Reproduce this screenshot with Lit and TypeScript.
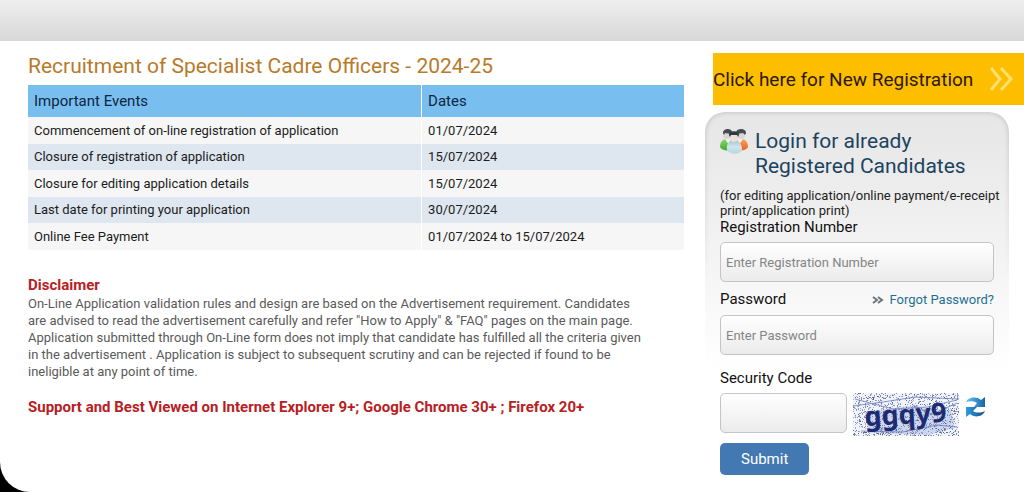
import { LitElement, html, css, svg } from "lit";
import { customElement } from "lit/decorators.js";

const EVENTS: [string, string][] = [
  ["Commencement of on-line registration of application", "01/07/2024"],
  ["Closure of registration of application", "15/07/2024"],
  ["Closure for editing application details", "15/07/2024"],
  ["Last date for printing your application", "30/07/2024"],
  ["Online Fee Payment", "01/07/2024 to 15/07/2024"],
];

/* Speckle field of the captcha, from a small seeded generator so it is stable. */
function speckles(count: number, w: number, h: number) {
  let seed = 7919;
  const rnd = () => {
    seed = (seed * 16807) % 2147483647;
    return seed / 2147483647;
  };
  const tones = ["#5b6691", "#7e89b5", "#a9b3d0", "#858ca6", "#9aa5c4"];
  return Array.from({ length: count }, () => ({
    x: Math.floor(rnd() * w),
    y: Math.floor(rnd() * h),
    fill: tones[Math.floor(rnd() * tones.length)],
  }));
}

@customElement("captcha-image")
export class CaptchaImage extends LitElement {
  static styles = css`
    :host { display: block; flex: none; }
    svg { display: block; overflow: visible; }
    .code { font: bold 27px/30px "Noto Sans", sans-serif; fill: #1c2b72; }
  `;
  private dots = speckles(1200, 106, 43);
  render() {
    return html`<svg width="106" height="43" viewBox="0 0 106 43" role="img" aria-label="Security code image">
      <rect width="106" height="43" fill="#f1f3fa" />
      <path d="M12 19 58 13l40 4 4 18-28 7-58-2z" fill="#b9c6ea" opacity=".65" />
      ${this.dots.map((d) => svg`<rect x=${d.x} y=${d.y} width="1" height="1" fill=${d.fill} />`)}
      <g fill="none" stroke="#6b7dbb" stroke-width="1" opacity=".8">
        <path d="M0 13 30 9l32-5 44 2" />
        <path d="M2 6l38 10 34-2 30-7" />
        <path d="M8 38l42 1 34-7 20 2" />
        <path d="M60 12l18 10 26-12" />
      </g>
      <text class="code" x="12" y="33" transform="rotate(-3 12 33)">ggqy9</text>
    </svg>`;
  }
}

@customElement("events-table")
export class EventsTable extends LitElement {
  static styles = css`
    :host { display: block; }
    table { width: 100%; border-collapse: collapse; table-layout: fixed; color: #1c1c1c; font-size: 13px; line-height: 16px; }
    th, td { box-sizing: border-box; padding: 0 6px; text-align: left; font-weight: 400; }
    th { height: 32px; background: #78beef; color: #10253f; font-size: 15px; }
    .event { width: 60%; border-right: 1px solid #fff; }
    td { height: 27px; background: #f6f6f6; }
    tr:nth-child(even) td { height: 26px; background: #dee6ef; }
  `;
  render() {
    return html`<table>
      <thead>
        <tr><th class="event" scope="col">Important Events</th><th scope="col">Dates</th></tr>
      </thead>
      <tbody>
        ${EVENTS.map(([name, date]) => html`<tr><td class="event">${name}</td><td>${date}</td></tr>`)}
      </tbody>
    </table>`;
  }
}

@customElement("login-panel")
export class LoginPanel extends LitElement {
  static styles = css`
    :host { display: block; }
    * { box-sizing: border-box; }
    .panel {
      padding: 17px 15px 16px;
      border-radius: 20px;
      background: linear-gradient(#e6e6e6, #f0f0f0 110px, #fff 258px);
      position: relative;
    }
    .panel::before {
      content: "";
      position: absolute;
      inset: 0;
      box-shadow: inset 0 0 4px 1px #c6c6c6;
      border-radius: 20px;
      pointer-events: none;
      -webkit-mask-image: linear-gradient(#000, transparent 170px);
      mask-image: linear-gradient(#000, transparent 170px);
    }
    .title { display: flex; gap: 6px; margin: 0; color: #1c4461; font-size: 21px; line-height: 25px; font-weight: 400; }
    .title svg { flex: none; }
    .note { margin: 9px -8px 1px 0; font-size: 13px; line-height: 15px; color: #222; }
    label { display: block; font-size: 15px; line-height: 17px; color: #111; }
    input {
      display: block;
      width: 100%;
      height: 40px;
      padding: 0 5px;
      border: 1px solid #c4c4c4;
      border-radius: 5px;
      background: linear-gradient(#fff, #ebebeb);
      font: 13px Roboto, sans-serif;
      color: #222;
    }
    input::placeholder { color: #858585; opacity: 1; }
    .field { margin-top: 6px; }
    .row { display: flex; justify-content: space-between; align-items: center; margin: 9px 0 7px; }
    .forgot { display: flex; align-items: center; gap: 5px; color: #1f7090; font-size: 13px; line-height: 16px; text-decoration: none; }
    .security { margin-top: 15px; }
    .captcha { display: flex; gap: 6px; margin-top: 6px; }
    .captcha input { width: 127px; }
    .refresh { margin-top: 3px; padding: 0; border: 0; background: none; height: 22px; }
    .refresh svg { display: block; }
    .submit {
      display: block;
      margin-top: 7px;
      padding: 7px 21px;
      border: 0;
      border-radius: 5px;
      background: #4379b2;
      color: #fff;
      font: 15px/18px Roboto, sans-serif;
    }
  `;
  render() {
    return html`<form class="panel" @submit=${(e: Event) => e.preventDefault()}>
      <h2 class="title">
        <svg width="29" height="25" viewBox="0 0 29 25" aria-hidden="true">
          <defs>
            <linearGradient id="green" x2="0" y2="1"><stop stop-color="#8fd46a" /><stop offset="1" stop-color="#3fae2f" /></linearGradient>
            <linearGradient id="orange" x2="0" y2="1"><stop stop-color="#f9a35e" /><stop offset="1" stop-color="#e8641c" /></linearGradient>
            <linearGradient id="pale" x2="0" y2="1"><stop stop-color="#a9c1cb" /><stop offset=".5" stop-color="#cfe6ec" /><stop offset="1" stop-color="#b5d6de" /></linearGradient>
          </defs>
          <path d="M0 18c0-5 3-8 6-8h5l2 10c-4 3-12 1-13-2z" fill="url(#green)" />
          <path d="M28 18c0-5-3-8-6-8h-5l-2 10c4 3 12 1 13-2z" fill="url(#orange)" />
          <path d="M5 10h6l-2 6zM17 10h6l-4 6z" fill="#eef1f2" />
          <circle cx="7" cy="6" r="4" fill="#dcd5d2" /><circle cx="21" cy="6" r="4" fill="#dcd5d2" />
          <path d="M3 4c0-5 9-5 9-1l-1 2-6-1-1 2zM16 3c1-4 10-4 10 1l-1 2-2-2-6 1z" fill="#454b54" />
          <path d="M7 21c-1-7 3-10 7-10s8 3 8 10c-2 5-13 5-15 0z" fill="url(#pale)" />
          <circle cx="14" cy="9" r="4" fill="#e6e0de" />
          <path d="M9 6c0-5 10-5 10 0l-1 2-1-2h-6l-1 2z" fill="#333941" />
        </svg>
        <span>Login for already Registered Candidates</span>
      </h2>
      <p class="note">(for editing application/online payment/e-receipt print/application print)</p>
      <label for="reg">Registration Number</label>
      <input id="reg" class="field" type="text" placeholder="Enter Registration Number" />
      <div class="row">
        <label for="pwd">Password</label>
        <a class="forgot" href="#forgot">
          <svg width="12" height="8" viewBox="0 0 12 8" aria-hidden="true">
            <path d="M1 1l4 3-4 3M6 1l4 3-4 3" fill="none" stroke="#6f7479" stroke-width="2" />
          </svg>
          Forgot Password?
        </a>
      </div>
      <input id="pwd" type="password" placeholder="Enter Password" />
      <label class="security" for="code">Security Code</label>
      <div class="captcha">
        <input id="code" type="text" autocomplete="off" />
        <captcha-image></captcha-image>
        <button class="refresh" type="button" aria-label="Refresh security code">
          <svg width="21" height="22" viewBox="0 0 21 22" aria-hidden="true">
            <defs>
              <linearGradient id="ra" x2="1"><stop stop-color="#69c6ee" /><stop offset="1" stop-color="#1663ac" /></linearGradient>
              <linearGradient id="rb" x2="1"><stop stop-color="#2f9bdc" /><stop offset="1" stop-color="#164e90" /></linearGradient>
            </defs>
            <path d="M1 6C3 1 12 0 16 4l4-3v10H9l3-4C9 5 5 5 1 6z" fill="url(#ra)" />
            <path d="M20 15c-2 6-11 7-15 3l-4 3V11h11l-4 4c3 2 8 2 12 0z" fill="url(#rb)" />
          </svg>
        </button>
      </div>
      <button class="submit" type="submit">Submit</button>
    </form>`;
  }
}

@customElement("app-root")
export class AppRoot extends LitElement {
  static styles = css`
    :host { display: block; background: #000; font-family: Roboto, sans-serif; }
    .page {
      min-height: 100vh;
      box-sizing: border-box;
      overflow: hidden;
      background: #fff;
      border-bottom-left-radius: 30px;
    }
    .band { height: 41px; background: linear-gradient(#eeeeee, #d8d8d8); }
    .columns { display: grid; grid-template-columns: minmax(0, 1fr) 319px; column-gap: 21px; padding-left: 28px; }
    .main { padding-top: 13px; }
    .heading { margin: 0 0 6px; color: #b87a28; font-size: 21px; line-height: 25px; font-weight: 400; }
    .warn { color: #b8201f; font-size: 15px; line-height: 17px; font-weight: 700; margin: 0; }
    .disclaimer { margin-top: 27px; }
    .text { margin: 1px 0 19px; max-width: 620px; color: #5a5a5a; font-size: 13px; line-height: 17px; }
    .side { padding-top: 12px; }
    .register {
      display: flex;
      align-items: center;
      justify-content: space-between;
      height: 52px;
      margin-left: 8px;
      padding-right: 11px;
      background: #fdbe00;
      color: #2c1805;
      font-size: 19px;
      text-decoration: none;
    }
    .login { margin: 7px 15px 0 0; }
  `;
  render() {
    return html`<div class="page">
      <header class="band"></header>
      <div class="columns">
        <main class="main">
          <h1 class="heading">Recruitment of Specialist Cadre Officers - 2024-25</h1>
          <events-table></events-table>
          <h2 class="warn disclaimer">Disclaimer</h2>
          <p class="text">
            On-Line Application validation rules and design are based on the Advertisement requirement. Candidates are
            advised to read the advertisement carefully and refer "How to Apply" &amp; "FAQ" pages on the main page.
            Application submitted through On-Line form does not imply that candidate has fulfilled all the criteria
            given in the advertisement . Application is subject to subsequent scrutiny and can be rejected if found to
            be ineligible at any point of time.
          </p>
          <p class="warn">Support and Best Viewed on Internet Explorer 9+; Google Chrome 30+ ; Firefox 20+</p>
        </main>
        <aside class="side">
          <a class="register" href="#register">
            Click here for New Registration
            <svg width="24" height="24" viewBox="0 0 24 24" aria-hidden="true">
              <path d="M2 1l9 11-9 11M12 1l10 11-10 11" fill="none" stroke="#ffdf6e" stroke-width="3" />
            </svg>
          </a>
          <login-panel class="login"></login-panel>
        </aside>
      </div>
    </div>`;
  }
}
